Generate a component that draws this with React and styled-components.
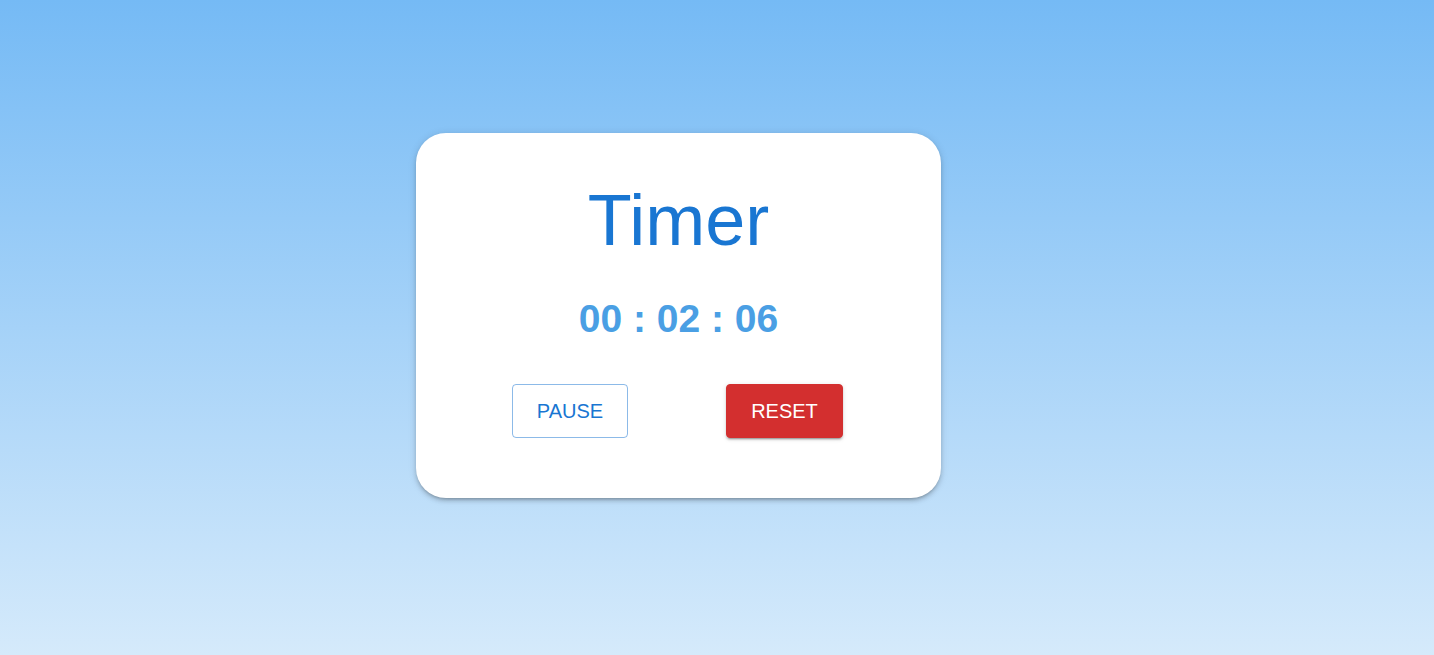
import React from 'react'
import styled, { createGlobalStyle } from 'styled-components'

const GlobalStyle = createGlobalStyle`
  html, body {
    margin: 0;
    padding: 0;
  }
  body {
    font-family: 'Liberation Sans', Arial, sans-serif;
  }
`

const Page = styled.div`
  min-height: 655px;
  box-sizing: border-box;
  padding: 133px 0 0 416px;
  background: linear-gradient(to bottom, #75baf5 0%, #d5eafb 100%);
`

const Card = styled.div`
  width: 525px;
  height: 365px;
  box-sizing: border-box;
  padding-top: 47px;
  background: #fff;
  border-radius: 30px;
  box-shadow: 0 3px 3px -2px rgba(0, 0, 0, 0.2), 0 3px 4px 0 rgba(0, 0, 0, 0.14),
    0 1px 8px 0 rgba(0, 0, 0, 0.12);
  display: flex;
  flex-direction: column;
  align-items: center;
`

const Title = styled.h1`
  margin: 0;
  font-size: 72px;
  font-weight: 400;
  line-height: 80px;
  color: #1976d2;
`

const Clock = styled.div`
  margin-top: 36px;
  font-size: 39px;
  font-weight: 700;
  line-height: 45px;
  color: #4a9fe4;
`

const Actions = styled.div`
  margin: 43px 2px 0 0;
  display: flex;
  gap: 98px;
`

const Button = styled.button`
  width: ${(p) => (p.$filled ? 117 : 116)}px;
  height: 54px;
  box-sizing: border-box;
  padding: 0;
  font-family: 'Liberation Sans', Arial, sans-serif;
  font-size: 20px;
  text-transform: uppercase;
  border-radius: 4px;
  cursor: pointer;
  color: ${(p) => (p.$filled ? '#fff' : '#1976d2')};
  background: ${(p) => (p.$filled ? '#d32f2f' : 'transparent')};
  border: 1px solid ${(p) => (p.$filled ? '#d32f2f' : 'rgba(25, 118, 210, 0.5)')};
  box-shadow: ${(p) =>
    p.$filled
      ? '0 3px 1px -2px rgba(0,0,0,0.2), 0 2px 2px 0 rgba(0,0,0,0.14), 0 1px 5px 0 rgba(0,0,0,0.12)'
      : 'none'};
`

export default function App() {
  return (
    <>
      <GlobalStyle />
      <Page>
        <Card>
          <Title>Timer</Title>
          <Clock>00 : 02 : 06</Clock>
          <Actions>
            <Button>Pause</Button>
            <Button $filled>Reset</Button>
          </Actions>
        </Card>
      </Page>
    </>
  )
}
